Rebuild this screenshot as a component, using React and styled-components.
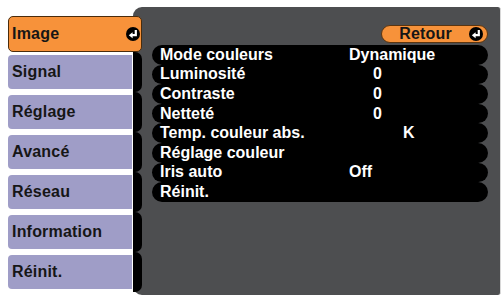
import React from "react";
import styled, { createGlobalStyle } from "styled-components";

const GlobalStyle = createGlobalStyle`
  html, body { margin: 0; padding: 0; background: #ffffff; }
  body { font-family: "Liberation Sans", Arial, sans-serif; }
`;

const Screen = styled.div`
  width: 504px;
  height: 298px;
  box-sizing: border-box;
  padding: 7px 0 0 8px;
  display: flex;
  align-items: flex-start;
`;

const TabColumn = styled.div`
  width: 134px;
  margin-top: 9px;
  margin-right: -9px;
  position: relative;
  z-index: 1;
  display: flex;
  flex-direction: column;
`;

const tabText = `
  font-size: 16px;
  font-weight: bold;
  letter-spacing: 0.2px;
  color: #161616;
`;

const ActiveTab = styled.div`
  height: 36px;
  box-sizing: border-box;
  background: #f7923a;
  border: 1px solid #4a2c0c;
  border-radius: 5px;
  display: flex;
  align-items: center;
  justify-content: space-between;
  padding: 0 1px 0 3px;
  ${tabText}
`;

const TabRow = styled.div`
  height: 40px;
  display: flex;
`;

const TabFace = styled.div`
  width: 124px;
  margin: 3px 0;
  box-sizing: border-box;
  background: #9f9dc7;
  border-radius: 4px 0 0 4px;
  padding-left: 4px;
  display: flex;
  align-items: center;
  ${tabText}
`;

const TabTail = styled.div`
  width: 9px;
  margin-left: 1px;
  background: #000;
  border-radius: 0 7px 7px 0;
`;

const Panel = styled.div`
  width: 368px;
  height: 288px;
  box-sizing: border-box;
  background: #4d4e50;
  border-radius: 9px 3px 3px 9px;
  border-right: 1px solid #d8d8d8;
  padding: 18px 12px 0 19px;
  display: flex;
  flex-direction: column;
`;

const Header = styled.div`
  display: flex;
  justify-content: flex-end;
  margin-bottom: 2px;
`;

const ReturnButton = styled.div`
  width: 107px;
  height: 18px;
  box-sizing: border-box;
  background: #f7923a;
  border: 1px solid #5b3510;
  border-radius: 9px;
  display: flex;
  align-items: center;
  justify-content: flex-end;
  gap: 17px;
  padding-right: 4px;
  ${tabText}
`;

const MenuList = styled.div`
  display: flex;
  flex-direction: column;
`;

const MenuRow = styled.div`
  height: 19.6px;
  background: #000;
  border-radius: 10px;
  display: flex;
  align-items: center;
  padding-left: 8px;
  color: #ffffff;
  font-size: 16px;
  font-weight: bold;
  letter-spacing: 0px;
  white-space: nowrap;
`;

const Label = styled.span`
  width: 189px;
  flex: none;
`;

const Value = styled.span`
  padding-left: ${(p) => p.$indent || 0}px;
`;

const ReturnIcon = () => (
  <svg width="14" height="14" viewBox="0 0 14 14">
    <circle cx="7" cy="7" r="7" fill="#000" />
    <path d="M9.8 3 V8.2 H6" stroke="#fff" strokeWidth="2.2" fill="none" />
    <path d="M2.8 8.2 L6.6 5.2 L6.6 11.2 Z" fill="#fff" />
  </svg>
);

const tabs = ["Signal", "Réglage", "Avancé", "Réseau", "Information", "Réinit."];

const rows = [
  { label: "Mode couleurs", value: "Dynamique", indent: 0 },
  { label: "Luminosité", value: "0", indent: 24 },
  { label: "Contraste", value: "0", indent: 24 },
  { label: "Netteté", value: "0", indent: 24 },
  { label: "Temp. couleur abs.", value: "K", indent: 54 },
  { label: "Réglage couleur", value: "", indent: 0 },
  { label: "Iris auto", value: "Off", indent: 0 },
  { label: "Réinit.", value: "", indent: 0 },
];

export default function App() {
  return (
    <>
      <GlobalStyle />
      <Screen>
        <TabColumn>
          <ActiveTab>
            <span>Image</span>
            <ReturnIcon />
          </ActiveTab>
          {tabs.map((t) => (
            <TabRow key={t}>
              <TabFace>{t}</TabFace>
              <TabTail />
            </TabRow>
          ))}
        </TabColumn>
        <Panel>
          <Header>
            <ReturnButton>
              <span>Retour</span>
              <ReturnIcon />
            </ReturnButton>
          </Header>
          <MenuList>
            {rows.map((r) => (
              <MenuRow key={r.label}>
                <Label>{r.label}</Label>
                <Value $indent={r.indent}>{r.value}</Value>
              </MenuRow>
            ))}
          </MenuList>
        </Panel>
      </Screen>
    </>
  );
}
